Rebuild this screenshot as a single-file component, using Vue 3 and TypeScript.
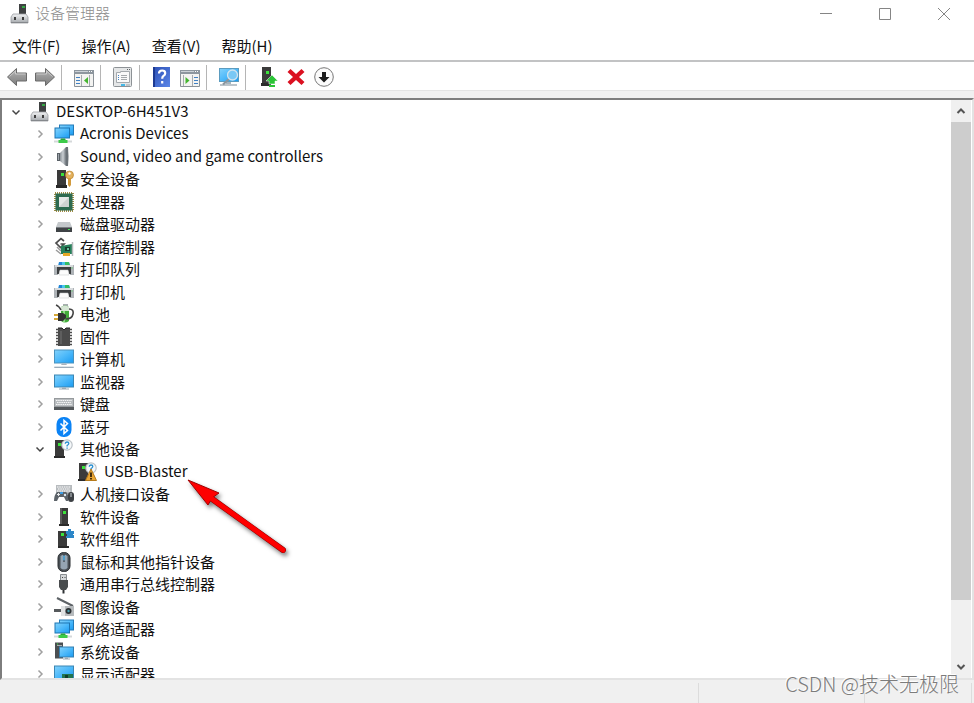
<script setup lang="ts">
import { computed, ref } from 'vue'

interface TreeRow {
  label: string
  icon: string
  level: number
  parent?: string
  branch: boolean
}

const ROOT = 'DESKTOP-6H451V3'
const OTHER = '其他设备'

const rows: TreeRow[] = [
  { label: ROOT, icon: 'root', level: 0, branch: true },
  { label: 'Acronis Devices', icon: 'network', level: 1, parent: ROOT, branch: true },
  { label: 'Sound, video and game controllers', icon: 'sound', level: 1, parent: ROOT, branch: true },
  { label: '安全设备', icon: 'security', level: 1, parent: ROOT, branch: true },
  { label: '处理器', icon: 'cpu', level: 1, parent: ROOT, branch: true },
  { label: '磁盘驱动器', icon: 'disk', level: 1, parent: ROOT, branch: true },
  { label: '存储控制器', icon: 'storage', level: 1, parent: ROOT, branch: true },
  { label: '打印队列', icon: 'printer', level: 1, parent: ROOT, branch: true },
  { label: '打印机', icon: 'printer', level: 1, parent: ROOT, branch: true },
  { label: '电池', icon: 'battery', level: 1, parent: ROOT, branch: true },
  { label: '固件', icon: 'firmware', level: 1, parent: ROOT, branch: true },
  { label: '计算机', icon: 'computer', level: 1, parent: ROOT, branch: true },
  { label: '监视器', icon: 'monitor', level: 1, parent: ROOT, branch: true },
  { label: '键盘', icon: 'keyboard', level: 1, parent: ROOT, branch: true },
  { label: '蓝牙', icon: 'bluetooth', level: 1, parent: ROOT, branch: true },
  { label: OTHER, icon: 'unknown', level: 1, parent: ROOT, branch: true },
  { label: 'USB-Blaster', icon: 'warning', level: 2, parent: OTHER, branch: false },
  { label: '人机接口设备', icon: 'hid', level: 1, parent: ROOT, branch: true },
  { label: '软件设备', icon: 'software', level: 1, parent: ROOT, branch: true },
  { label: '软件组件', icon: 'component', level: 1, parent: ROOT, branch: true },
  { label: '鼠标和其他指针设备', icon: 'mouse', level: 1, parent: ROOT, branch: true },
  { label: '通用串行总线控制器', icon: 'usb', level: 1, parent: ROOT, branch: true },
  { label: '图像设备', icon: 'imaging', level: 1, parent: ROOT, branch: true },
  { label: '网络适配器', icon: 'network', level: 1, parent: ROOT, branch: true },
  { label: '系统设备', icon: 'system', level: 1, parent: ROOT, branch: true },
  { label: '显示适配器', icon: 'display', level: 1, parent: ROOT, branch: true },
]

const menus: string[] = ['文件(F)', '操作(A)', '查看(V)', '帮助(H)']

const toolGroups: { icon: string; label: string }[][] = [
  [
    { icon: 'back', label: '后退' },
    { icon: 'forward', label: '前进' },
  ],
  [{ icon: 'pane-left', label: '显示/隐藏控制台树' }],
  [{ icon: 'properties', label: '属性' }],
  [
    { icon: 'help', label: '帮助' },
    { icon: 'pane-right', label: '显示/隐藏操作窗格' },
  ],
  [{ icon: 'scan', label: '扫描检测硬件改动' }],
  [
    { icon: 'update', label: '更新驱动程序' },
    { icon: 'remove', label: '卸载设备' },
    { icon: 'disable', label: '禁用设备' },
  ],
]

const open = ref<Set<string>>(new Set([ROOT, OTHER]))

const visibleRows = computed(() =>
  rows.filter((row) => {
    if (row.level === 0) return true
    if (!open.value.has(ROOT)) return false
    return row.parent === undefined || open.value.has(row.parent)
  }),
)

function isLatin(label: string): boolean {
  return /^[\x20-\x7e]+$/.test(label)
}

function toggle(label: string): void {
  const next = new Set(open.value)
  if (next.has(label)) next.delete(label)
  else next.add(label)
  open.value = next
}
</script>

<template>
  <div class="window">
    <svg class="sprites" aria-hidden="true">
      <defs>
        <linearGradient id="g-screen" x1="0" y1="0" x2="1" y2="1">
          <stop offset="0" stop-color="#7fd0fb" />
          <stop offset="0.5" stop-color="#4db9fa" />
          <stop offset="1" stop-color="#1e9df2" />
        </linearGradient>
        <linearGradient id="g-metal" x1="0" y1="0" x2="0" y2="1">
          <stop offset="0" stop-color="#f2f3f4" />
          <stop offset="1" stop-color="#a4a8ac" />
        </linearGradient>
        <linearGradient id="g-gray" x1="0" y1="0" x2="0" y2="1">
          <stop offset="0" stop-color="#b4b4b4" />
          <stop offset="1" stop-color="#7c7c7c" />
        </linearGradient>
        <linearGradient id="g-cone" x1="0" y1="0" x2="1" y2="0">
          <stop offset="0" stop-color="#8d949a" />
          <stop offset="0.5" stop-color="#c9ced2" />
          <stop offset="1" stop-color="#6f767c" />
        </linearGradient>
        <linearGradient id="g-help" x1="0" y1="0" x2="1" y2="1">
          <stop offset="0" stop-color="#2b4fb5" />
          <stop offset="1" stop-color="#5b86e8" />
        </linearGradient>

        <symbol id="i-software" viewBox="0 0 20 20">
          <path d="M6 1h8v16H6z" fill="#3b3b3b" />
          <path d="M6 1h2v16H6z" fill="#5a5a5a" />
          <path d="M5 17h10v2H5z" fill="#2b2b2b" />
          <path d="M9 4h3v3H9z" fill="#3be33b" />
        </symbol>
        <symbol id="i-root" viewBox="0 0 20 20">
          <path d="M9 0h7v11H9z" fill="#3f4142" />
          <path d="M12 2h3v2h-3z" fill="#35a844" />
          <path d="M3 10h13l2 3v6H1v-6z" fill="url(#g-metal)" stroke="#9a9da1" stroke-width="0.8" />
          <path d="M4 13h2v3H4zM12 13h2v3h-2z" fill="#3d3d3d" />
          <path d="M1 18h17v1H1z" fill="#85888c" />
        </symbol>
        <symbol id="i-network" viewBox="0 0 20 20">
          <path d="M5 0.500h15v11H5z" fill="#237bb8" />
          <path d="M6 1.500h13v9H6z" fill="url(#g-screen)" />
          <path d="M0.500 3.500h15.500v11H0.500z" fill="#1d75b2" />
          <path d="M1.500 4.500h13.500v9H1.500z" fill="url(#g-screen)" />
          <path d="M7 14.500h4l1 2H6z" fill="#2ba33a" />
          <path d="M0 16.500h18v2H0z" fill="#d5d8da" />
          <path d="M4.500 16h9v3h-9z" fill="#3ccb49" />
        </symbol>
        <symbol id="i-sound" viewBox="0 0 20 20">
          <path d="M3 6h4v8H3z" fill="#5a6167" />
          <path d="M6 6l6-6v19l-6-5z" fill="url(#g-cone)" />
          <path d="M12 0h2q1 9.500 0 19h-2z" fill="#6a7177" />
          <path d="M4 7h1v6H4z" fill="#9fa6ac" />
        </symbol>
        <symbol id="i-security" viewBox="0 0 20 20">
          <path d="M3 1h9v16H3z" fill="#3a3a3a" />
          <path d="M2 16h11v3H2z" fill="#292929" />
          <path d="M7 4h3v3H7z" fill="#39e239" />
          <circle cx="15.500" cy="6" r="4" fill="#e3b15c" stroke="#b98530" stroke-width="0.700" />
          <circle cx="15.500" cy="4.500" r="1.200" fill="#fff" />
          <path d="M14 9h3v7l-1.500 2L14 16z" fill="#d19a3d" />
        </symbol>
        <symbol id="i-cpu" viewBox="0 0 20 20">
          <rect x="1" y="1" width="18" height="18" fill="none" stroke="#a08c45" stroke-width="2" stroke-dasharray="1 1" />
          <path d="M1.500 1.500h17v17h-17z" fill="#2e6b50" />
          <path d="M5 5h10v10H5z" fill="#e6e8e7" />
          <path d="M15 5v10H5z" fill="#cfd3d1" />
        </symbol>
        <symbol id="i-disk" viewBox="0 0 20 20">
          <path d="M4 8h12l2 5H2z" fill="#c4c8cb" />
          <path d="M2 13h16v5H2z" fill="#3f4346" />
          <path d="M2 13h16v1H2z" fill="#777c80" />
          <path d="M14 15h2v1h-2z" fill="#42df56" />
        </symbol>
        <symbol id="i-storage" viewBox="0 0 20 20">
          <path d="M10 4L7 1.500 2 6l4.500 4.500L10 7H6.500" fill="none" stroke="#4d4d4d" stroke-width="1.700" />
          <path d="M3 10l4 4M2 13l5 4" stroke="#999" stroke-width="1.500" />
          <path d="M7 9l11-2v10H7z" fill="#27805a" />
          <path d="M18.500 5v14" stroke="#b6babc" stroke-width="1.500" />
          <path d="M11 10h5v4h-5z" fill="#193e30" />
          <path d="M13 11h2v2h-2z" fill="#67c29b" />
          <path d="M9 16h7v3H9z" fill="#e5a827" />
        </symbol>
        <symbol id="i-printer" viewBox="0 0 20 20">
          <path d="M5 3h10l1 4H4z" fill="#2186d6" />
          <path d="M11 3h4l1 4h-5z" fill="#35bd64" />
          <path d="M8 3h3v3H8z" fill="#49c7ea" />
          <path d="M0 6h20v10h-4v-4H4v4H0z" fill="#aeb3b7" />
          <path d="M1 6h18v2H1z" fill="#d8dbdd" />
          <path d="M3 8h14v7h-2l-1-4H6l-1 4H3z" fill="#3c3f41" />
          <path d="M6 11h8l1 5H5z" fill="#fcfcfc" stroke="#c6c9cb" stroke-width="0.500" />
          <path d="M17.500 8.500h1v1h-1z" fill="#47dd53" />
        </symbol>
        <symbol id="i-battery" viewBox="0 0 20 20">
          <path d="M9 0h5v2H9z" fill="#a8adb0" />
          <path d="M7 3q4-3 8 0v14q-4 3-8 0z" fill="#43ab3c" />
          <path d="M7 3q4-3 8 0v4H7z" fill="#d6e6d4" />
          <path d="M9 7h2v11H9z" fill="#8fda86" />
          <path d="M2 1q3 1 5 5M15 5q5 0 4 5-1 5-7 5" fill="none" stroke="#454545" stroke-width="1.600" />
          <path d="M4 9h5l3 2v3l-3 3H4z" fill="#333" />
          <path d="M0 11h4M0 15h4" stroke="#d6a838" stroke-width="1.800" />
        </symbol>
        <symbol id="i-firmware" viewBox="0 0 20 20">
          <path d="M2 2.500h3M2 5.500h3M2 8.500h3M2 11.500h3M2 14.500h3M2 17.500h3M15 2.500h3M15 5.500h3M15 8.500h3M15 11.500h3M15 14.500h3M15 17.500h3" stroke="#4c4c4c" stroke-width="1.500" />
          <path d="M4 1h4l2 2 2-2h4v18H4z" fill="#4b4b4b" />
          <path d="M6 4h2v13H6z" fill="#5e5e5e" />
          <path d="M4 1h4l2 2 2-2h4" fill="none" stroke="#252525" stroke-width="1" />
        </symbol>
        <symbol id="i-computer" viewBox="0 0 20 20">
          <path d="M0 0.500h20v14H0z" fill="#4a93bf" />
          <path d="M1 1.500h18v12H1z" fill="url(#g-screen)" />
          <path d="M8 14.500h4l1 1.500H7z" fill="#a9b4bd" />
          <path d="M1 17h18l1 2H0z" fill="#9cacb9" />
          <path d="M1 17h18v1H1z" fill="#dce4e9" />
        </symbol>
        <symbol id="i-monitor" viewBox="0 0 20 20">
          <path d="M0 2.500h20v13H0z" fill="#3b86b3" />
          <path d="M1 3.500h18v11H1z" fill="url(#g-screen)" />
          <path d="M8 15.500h4v1h3v1H5v-1h3z" fill="#9daab4" />
        </symbol>
        <symbol id="i-keyboard" viewBox="0 0 20 20">
          <path d="M0 4h20v12H0z" fill="#969a9d" />
          <path d="M1 5h18v7H1z" fill="#b9bdc0" />
          <path d="M2 6.500h16M3 8.500h14M2 10.500h16" stroke="#f7f7f7" stroke-width="1.200" stroke-dasharray="1.500 0.700" />
          <path d="M0 13h20v3H0z" fill="#54585b" />
        </symbol>
        <symbol id="i-bluetooth" viewBox="0 0 20 20">
          <rect x="2.500" y="0" width="15" height="20" rx="7" fill="#0b83f5" />
          <path d="M6.500 6.500l7 7L10 16.500v-13l3.500 3-7 7" fill="none" stroke="#fff" stroke-width="1.500" />
        </symbol>
        <symbol id="i-unknown" viewBox="0 0 20 20">
          <path d="M1 1h9v16H1z" fill="#3b3b3b" />
          <path d="M0 17h11v2H0z" fill="#2b2b2b" />
          <path d="M4 4h3v3H4z" fill="#3be33b" />
          <circle cx="13" cy="6" r="5.200" fill="#f5f8fa" stroke="#bcc2c7" stroke-width="1.200" />
          <path d="M11.300 4.700q0-1.700 1.800-1.700 1.700 0 1.700 1.500 0 1-1.700 2v1M13.100 8.500v1.200" fill="none" stroke="#2a8fd0" stroke-width="1.300" />
        </symbol>
        <symbol id="i-warning" viewBox="0 0 20 20">
          <use href="#i-unknown" width="20" height="20" />
          <path d="M13 7L18.500 18.500h-11z" fill="#e8a534" stroke="#b57a1c" stroke-width="1" stroke-linejoin="round" />
          <path d="M13 10.500v4.500M13 16v1.500" stroke="#2d1d06" stroke-width="1.700" />
        </symbol>
        <symbol id="i-hid" viewBox="0 0 20 20">
          <path d="M2 1h16v9H2z" fill="#b7bbbe" />
          <path d="M3 3h14M4 5h12M3 7h14" stroke="#fff" stroke-width="1.100" stroke-dasharray="1.500 0.800" />
          <path d="M3 8h9q3 2 2 9h-2l-2-4H5l-2 4H0Q0 11 3 8z" fill="#5c6369" />
          <path d="M3 10.500h3M4.500 9v3" stroke="#e6e8ea" stroke-width="1" />
          <path d="M6 8h3v2H6z" fill="#3b9ce4" />
          <circle cx="11" cy="11" r="1.200" fill="#dfe9f1" />
          <rect x="14" y="8" width="6" height="10" rx="3" fill="#3d4145" />
          <path d="M17 9v4" stroke="#c8ced3" stroke-width="1" />
        </symbol>
        <symbol id="i-component" viewBox="0 0 20 20">
          <path d="M4 2h9v15H4z" fill="#3b3b3b" />
          <path d="M4 17h11v2H4z" fill="#2b2b2b" />
          <path d="M7 4h3v3H7z" fill="#3be33b" />
          <path d="M12 2h2V0h3v2h3v3h-1v1h1v3h-8V7h1V5h-1z" fill="#2c86c8" />
        </symbol>
        <symbol id="i-mouse" viewBox="0 0 20 20">
          <rect x="4" y="0.500" width="12" height="19" rx="5.500" fill="#4a5055" stroke="#292d30" />
          <path d="M6.500 4q3.500-3 7 0v12q-3.500 3-7 0z" fill="#95a5b2" />
          <path d="M10 2v8" stroke="#26292c" stroke-width="1" />
          <rect x="9.300" y="3.500" width="1.400" height="5" rx="0.700" fill="#4eb4ee" />
        </symbol>
        <symbol id="i-usb" viewBox="0 0 20 20">
          <path d="M6.500 0.500h6v6h-6z" fill="#d3d6d8" stroke="#888d91" />
          <path d="M8 3h1v1H8zM10.500 3h1v1h-1z" fill="#444" />
          <path d="M5 6h9v7l-2 3H7l-2-3z" fill="#494c4e" />
          <path d="M8.500 16h2v3.500h-2z" fill="#2f3234" />
        </symbol>
        <symbol id="i-imaging" viewBox="0 0 20 20">
          <path d="M3 1l16 8" stroke="#5d6266" stroke-width="2" />
          <path d="M0 12h8v3H0z" fill="#56595c" />
          <path d="M7 9h13v10H7z" fill="#b6babd" />
          <path d="M7 9h4v10H7z" fill="#e0e2e3" />
          <circle cx="14.500" cy="14" r="3" fill="#2c3134" />
          <circle cx="14.500" cy="14" r="1.200" fill="#459eac" />
        </symbol>
        <symbol id="i-system" viewBox="0 0 20 20">
          <path d="M1 0.500h8v16H1z" fill="#4b4f52" />
          <path d="M3 3h5v1H3z" fill="#a9adb0" />
          <path d="M3 1.500h1v1H3z" fill="#3be33b" />
          <path d="M5 4.500h15v11H5z" fill="#3480b2" />
          <path d="M6 5.500h13v9H6z" fill="url(#g-screen)" />
          <path d="M11 15.500h3v1h2v1H9v-1h2z" fill="#9daab4" />
        </symbol>
        <symbol id="i-display" viewBox="0 0 20 20">
          <path d="M0 1.500h20v14H0z" fill="#3b86b3" />
          <path d="M1 2.500h18v12H1z" fill="url(#g-screen)" />
          <path d="M8 10h11v6H8z" fill="#21744f" />
          <path d="M11 11h3v3h-3z" fill="#123d2a" />
          <path d="M9 16h8v2H9z" fill="#dca52c" />
        </symbol>

        <symbol id="i-back" viewBox="0 0 20 20">
          <path d="M0.500 10l9-8.500V6H19.500v8H9.500v4.500z" fill="url(#g-gray)" stroke="#6a6a6a" stroke-linejoin="round" />
          <path d="M2.500 9.500l6-5.500v3h10" fill="none" stroke="#c9c9c9" />
        </symbol>
        <symbol id="i-forward" viewBox="0 0 20 20">
          <path d="M19.500 10l-9-8.500V6H0.500v8h10v4.500z" fill="url(#g-gray)" stroke="#6a6a6a" stroke-linejoin="round" />
          <path d="M17.500 9.500l-6-5.500v3h-10" fill="none" stroke="#c9c9c9" />
        </symbol>
        <symbol id="i-pane-left" viewBox="0 0 20 20">
          <path d="M0.500 3.500h19v16h-19z" fill="#f3f3f1" stroke="#8b9298" />
          <path d="M0 3h20v4H0z" fill="#8d969e" />
          <path d="M1 4.500h13" stroke="#cbd1d6" />
          <path d="M15 4h1v1h-1zM17 4h1v1h-1z" fill="#fff" />
          <path d="M7.500 8v11M15.500 8v11" stroke="#a7acb0" />
          <path d="M2 10.500h4M2 13.500h4M2 16.500h4" stroke="#3f80c4" />
          <path d="M14 10v7l-4-3.500z" fill="#44b52f" />
        </symbol>
        <symbol id="i-pane-right" viewBox="0 0 20 20">
          <path d="M0.500 3.500h19v16h-19z" fill="#f3f3f1" stroke="#8b9298" />
          <path d="M0 3h20v4H0z" fill="#8d969e" />
          <path d="M1 4.500h13" stroke="#cbd1d6" />
          <path d="M15 4h1v1h-1zM17 4h1v1h-1z" fill="#fff" />
          <path d="M3.500 8v11M12.500 8v11" stroke="#a7acb0" />
          <path d="M14 10.500h4M14 13.500h4M14 16.500h4" stroke="#3f80c4" />
          <path d="M5.500 10v7l4-3.500z" fill="#44b52f" />
        </symbol>
        <symbol id="i-properties" viewBox="0 0 20 20">
          <rect x="0.500" y="0.500" width="18" height="19" rx="1" fill="#e4e6e7" stroke="#8d9296" />
          <path d="M14 2h1v1h-1zM16 2h1v1h-1z" fill="#5c6165" />
          <path d="M3.500 5.500h4v-1h9v11h-13z" fill="#fafafa" stroke="#a4a9ad" />
          <path d="M5 8.500h1M5 10.500h1M5 12.500h1" stroke="#3f80c4" />
          <path d="M8 8.500h6M8 10.500h6M8 12.500h6" stroke="#a5a9ac" />
          <path d="M8 17h4v2H8z" fill="#45b8e6" />
          <path d="M13 17h4v2h-4z" fill="#bfc4c7" />
        </symbol>
        <symbol id="i-help" viewBox="0 0 20 20">
          <path d="M1 0h17v20H1z" fill="url(#g-help)" />
          <path d="M1 0h2v20H1z" fill="#1d3a92" />
          <path d="M7 6.500q0-3 3.200-3 3 0 3 2.700 0 1.500-1.700 2.700-1.300 1-1.300 2.800M10.200 14v2.500" fill="none" stroke="#fff" stroke-width="2.200" />
        </symbol>
        <symbol id="i-scan" viewBox="0 0 20 20">
          <path d="M0 1h20v14H0z" fill="#5b9cc0" />
          <path d="M1 2h18v12H1z" fill="url(#g-screen)" />
          <path d="M7 15h5v2H7z" fill="#a6b4be" />
          <path d="M1 18h17" stroke="#a6b0b8" stroke-width="1.500" />
          <path d="M10.500 11.500L4 17.500" stroke="#8a959d" stroke-width="2.200" />
          <circle cx="13.500" cy="8" r="5" fill="#79c8f5" stroke="#d0e3ee" stroke-width="1.300" />
        </symbol>
        <symbol id="i-update" viewBox="0 0 20 20">
          <path d="M4 0h9v17H4z" fill="#3b3b3b" />
          <path d="M3 16h10v3H3z" fill="#2b2b2b" />
          <path d="M8 4h3v3H8z" fill="#3be33b" />
          <path d="M14 8l6 6h-3v3h-6v-3H8z" fill="#2bc437" stroke="#fff" stroke-width="0.500" />
          <path d="M11 18h6v2h-6z" fill="#2bc437" />
        </symbol>
        <symbol id="i-remove" viewBox="0 0 20 20">
          <path d="M4.500 2L10 7l5.500-5L18.500 5l-5.500 5 5.500 5-3 3L10 13l-5.500 5L1.500 15 7 10 1.500 5z" fill="#db1020" />
        </symbol>
        <symbol id="i-disable" viewBox="0 0 20 20">
          <circle cx="10" cy="10" r="9.300" fill="#fbfbfb" stroke="#777" />
          <path d="M8 5h4v5h3.500L10 15.500 4.500 10H8z" fill="#1c1c1c" />
        </symbol>
      </defs>
    </svg>

    <header class="titlebar">
      <svg class="app-icon" aria-hidden="true"><use href="#i-root" /></svg>
      <h1 class="title">设备管理器</h1>
      <div class="controls">
        <button type="button" aria-label="最小化">
          <svg viewBox="0 0 12 12"><path d="M0 5.500h12" /></svg>
        </button>
        <button type="button" aria-label="最大化">
          <svg viewBox="0 0 12 12"><path d="M0.500 0.500h11v11h-11z" /></svg>
        </button>
        <button type="button" aria-label="关闭">
          <svg viewBox="0 0 12 12"><path d="M0 0l12 12M12 0L0 12" /></svg>
        </button>
      </div>
    </header>

    <nav class="menubar">
      <button v-for="menu in menus" :key="menu" type="button">{{ menu }}</button>
    </nav>

    <div class="toolbar" role="toolbar">
      <div v-for="(group, index) in toolGroups" :key="index" class="tool-group">
        <button v-for="tool in group" :key="tool.icon" type="button" :aria-label="tool.label">
          <svg aria-hidden="true"><use :href="'#i-' + tool.icon" /></svg>
        </button>
      </div>
    </div>

    <main class="pane">
      <ul class="tree" role="tree">
        <li
          v-for="row in visibleRows"
          :key="row.label"
          class="row"
          :class="'level-' + row.level"
          role="treeitem"
          :aria-level="row.level + 1"
        >
          <button
            v-if="row.branch"
            type="button"
            class="expander"
            :class="{ open: open.has(row.label) }"
            :aria-label="row.label"
            :aria-expanded="open.has(row.label)"
            @click="toggle(row.label)"
          >
            <svg viewBox="0 0 10 10" aria-hidden="true"><path d="M3.500 1.500L7 5 3.500 8.500" /></svg>
          </button>
          <span v-else class="expander"></span>
          <svg class="icon" aria-hidden="true"><use :href="'#i-' + row.icon" /></svg>
          <span class="label" :class="{ latin: isLatin(row.label) }">{{ row.label }}</span>
        </li>
      </ul>
      <div class="scrollbar">
        <button type="button" aria-label="向上滚动">
          <svg viewBox="0 0 10 10"><path d="M1.500 7L5 3.500 8.500 7" /></svg>
        </button>
        <div class="track"><div class="thumb"></div></div>
        <button type="button" aria-label="向下滚动">
          <svg viewBox="0 0 10 10"><path d="M1.500 3L5 6.500 8.500 3" /></svg>
        </button>
      </div>
    </main>

    <footer class="statusbar">
      <span class="cell main-cell"></span>
      <span class="cell"></span>
      <span class="cell small-cell"></span>
    </footer>

    <svg class="arrow" viewBox="0 0 110 84" aria-hidden="true">
      <path d="M22 17L97 71" stroke="#8e0000" stroke-width="6" stroke-linecap="round" />
      <path d="M2 1L33 14 26 19 22 26z" fill="#fe0000" stroke="#a00000" stroke-width="1" />
      <path d="M22 17L97 71" stroke="#fe0000" stroke-width="5" stroke-linecap="round" />
    </svg>
    <div class="watermark">CSDN @技术无极限</div>
  </div>
</template>

<style>
body {
  margin: 0;
  overflow: hidden;
}
</style>

<style scoped>
.window {
  position: relative;
  display: flex;
  flex-direction: column;
  height: 100vh;
  background: #fff;
  color: #111;
  font-family: "Noto Sans CJK SC", "Noto Sans", sans-serif;
  font-size: 15px;
  line-height: 20px;
}

.sprites {
  position: absolute;
  width: 0;
  height: 0;
}

button {
  margin: 0;
  padding: 0;
  border: 0;
  background: none;
  color: inherit;
  font: inherit;
}

.titlebar {
  display: flex;
  align-items: center;
  height: 28px;
  padding: 0 1px 0 10px;
}

.app-icon {
  width: 20px;
  height: 20px;
}

.title {
  flex: 1;
  margin: 0 0 0 5px;
  padding-bottom: 2px;
  color: #8d8d8d;
  font-size: 15px;
  font-weight: 300;
}

.controls {
  display: flex;
}

.controls button {
  display: grid;
  place-items: center;
  width: 59px;
  height: 28px;
}

.controls svg {
  width: 12px;
  height: 12px;
  fill: none;
  stroke: #858585;
}

.menubar {
  display: flex;
  align-items: center;
  gap: 21px;
  height: 32px;
  padding: 0 12px;
  border-bottom: 2px solid #c2c3c4;
}

.menubar button {
  padding-top: 4px;
}

.toolbar {
  display: flex;
  align-items: center;
  height: 26px;
  padding: 2px 0 0 7px;
  border-bottom: 1px solid #e3e3e3;
}

.tool-group {
  display: flex;
  align-items: center;
  gap: 8px;
  height: 25px;
}

.tool-group + .tool-group {
  margin-left: 6px;
  padding-left: 12px;
  border-left: 1px solid #b5b5b5;
}

.tool-group button,
.tool-group svg {
  display: block;
  width: 20px;
  height: 20px;
}

.pane {
  display: flex;
  flex: 1;
  min-height: 0;
  margin-top: 7px;
  padding-right: 1px;
  border: 2px solid #7d7d7d;
  border-right-color: #e3e3e3;
  border-bottom-color: #e3e3e3;
  box-shadow: 0 -7px 0 #f0f0f0;
}

.tree {
  flex: 1;
  min-width: 0;
  margin: 0;
  padding: 0;
  overflow: hidden;
  list-style: none;
}

.row {
  display: flex;
  align-items: center;
  height: 22px;
  padding-left: 4px;
  white-space: nowrap;
}

.row:nth-child(odd) {
  height: 23px;
}

.level-1 {
  padding-left: 28px;
}

.level-2 {
  padding-left: 52px;
}

.expander {
  display: grid;
  flex: none;
  place-items: center;
  width: 20px;
  height: 20px;
}

.expander svg {
  width: 10px;
  height: 10px;
  fill: none;
  stroke: #a0a0a0;
  stroke-width: 1.5;
}

.expander.open svg {
  transform: rotate(90deg);
  stroke: #454545;
}

.icon {
  flex: none;
  width: 20px;
  height: 20px;
  margin: 0 6px 0 4px;
}

.label.latin {
  padding-bottom: 2px;
}

.scrollbar {
  display: flex;
  flex: none;
  flex-direction: column;
  width: 20px;
  background: #f0f0f0;
}

.scrollbar button {
  display: grid;
  place-items: center;
  height: 22px;
}

.scrollbar svg {
  width: 10px;
  height: 10px;
  fill: none;
  stroke: #555;
  stroke-width: 2;
}

.track {
  flex: 1;
}

.thumb {
  height: 478px;
  max-height: 90%;
  background: #cdcdcd;
}

.statusbar {
  display: flex;
  flex: none;
  height: 20px;
  padding: 3px 2px 0 0;
  background: #f0f0f0;
}

.cell {
  flex: 0 0 166px;
  box-sizing: border-box;
  border-right: 1px solid #dcdcdc;
}

.main-cell {
  flex: 1;
}

.small-cell {
  flex-basis: 107px;
}

.arrow {
  position: absolute;
  top: 479px;
  left: 186px;
  width: 110px;
  height: 84px;
  fill: none;
  filter: drop-shadow(2px 3px 2px rgba(0, 0, 0, 0.5));
  pointer-events: none;
}

.watermark {
  position: absolute;
  right: 15px;
  bottom: 5px;
  color: #7c7c7c;
  font-size: 20px;
  font-weight: 300;
  line-height: 28px;
  text-shadow: -1px -1px 0 #fff;
  pointer-events: none;
}
</style>
